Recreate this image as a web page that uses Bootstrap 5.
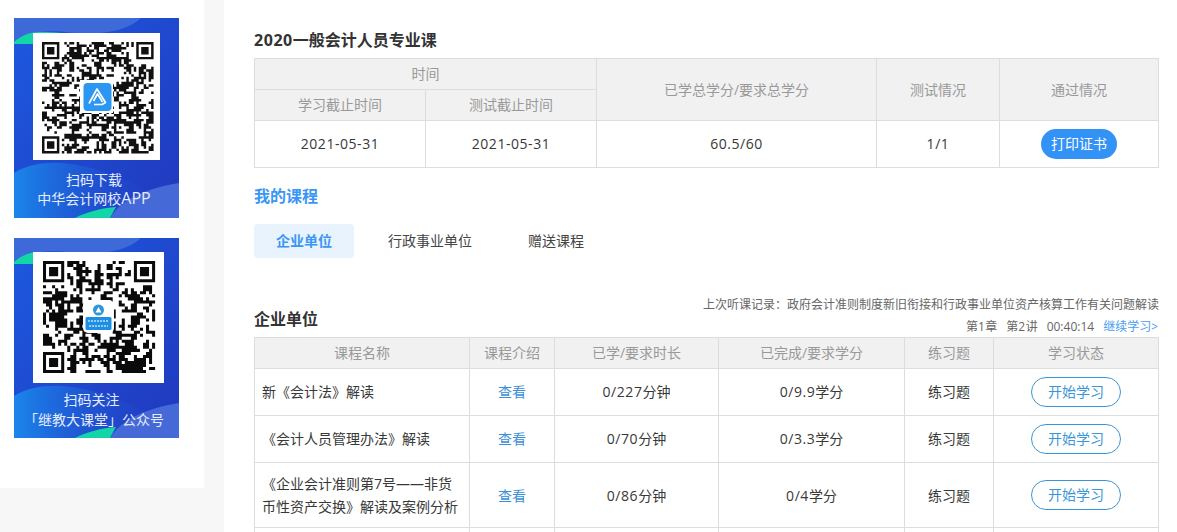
<!DOCTYPE html>
<html lang="zh-CN">
<head>
<meta charset="utf-8">
<title>我的课程</title>
<link href="https://cdn.jsdelivr.net/npm/bootstrap@5.3.0/dist/css/bootstrap.min.css" rel="stylesheet">
<style>
html,body{height:532px;overflow:hidden}
body{background:#f7f7f7;font-family:"Open Sans","Noto Sans CJK SC",sans-serif;font-size:14px;color:#333;line-height:20px}
.shell{height:532px}
.side{width:204px;height:488px;background:#fff;padding:18px 0 0 14px;gap:20px;flex:none}
.main-pane{margin-left:20px;background:#fff;padding:28px 18px 0 30px;flex:1 1 auto;min-width:0}
.promo{position:relative;width:165px;height:200px;overflow:hidden;color:#e6ecff;text-align:center}
.promo-bg{position:absolute;left:0;top:0;width:165px;height:200px}
.promo-body{position:relative}
.qr-box{background:#fff;margin-left:19px;display:block}
.qr-a{width:127px;height:127px;margin-top:15px}
.qr-b{width:131px;height:131px;margin-top:14px}
.qr-box svg{display:block;filter:blur(.3px)}
.promo-txt{line-height:19px;margin-top:10px;width:160px}
.promo-txt-b{line-height:20px;margin-top:7px;width:160px;white-space:nowrap}
.line-shift{padding-right:5px}
.app-word{font-size:16px}
.num{letter-spacing:.55px}
.sec-title{font-size:16px;font-weight:700;line-height:24px;color:#333;margin:0 0 6px}
.sec-blue{color:#3a96f5;margin:16px 0 0}
.tab-row{margin-top:16px;gap:12px}
.tab-item{height:34px;line-height:34px;padding:0 22px;border-radius:4px;color:#444;text-decoration:none}
.tab-on{background:#e8f3fe;color:#3a96f5;font-weight:700}
.sec-head{margin-top:36px}
.last-rec{font-size:12px;color:#666;text-align:right}
.rec-a{line-height:22px;margin-bottom:1px}
.rec-b{line-height:20px;padding-right:1px}
.rec-b a{color:#4a9df0;text-decoration:none;margin-left:9px}
.rec-b span.gap-seg{margin-left:9px}
.rec-lead{letter-spacing:.4px}
.grid-tbl.table{table-layout:fixed;width:904px;margin:0;border-color:#ddd;text-align:center;color:#333}
.grid-tbl.table>*>*>*{padding:0 7px;border-color:#ddd;vertical-align:middle;box-shadow:none;color:#383838;background:#fff;font-weight:400}
.grid-tbl.table>thead>tr>th{background:#f1f1f1;color:#999;height:31px}
.row-cert>td{height:47px}
.row-std>td{height:47px}
.grid-tbl.table>tbody>.row-tall>td{height:65px;line-height:23px}
.grid-tbl.table>tbody>tr>.name-cell{text-align:left}
.grid-tbl .view-link{color:#3a8fd8;text-decoration:none}
.pill-print{width:76px;height:30px;line-height:30px;padding:0;border:0;border-radius:15px;background:#3292f6;color:#fff;font-size:14px}
.pill-start{width:90px;height:30px;line-height:28px;padding:0;border:1px solid #3a96d8;border-radius:15px;background:#fff;color:#3a96d8;font-size:14px}
</style>
</head>
<body>
<div class="shell d-flex">
  <aside class="side d-flex flex-column">
    <div class="promo">
      <svg class="promo-bg" viewBox="0 0 165 200" aria-hidden="true">
        <defs>
          <linearGradient id="bgA" x1="0" y1="0" x2="1" y2="1"><stop offset="0" stop-color="#1c5ae0"/><stop offset="1" stop-color="#2138bd"/></linearGradient>
          <linearGradient id="swA" x1="0" y1="0" x2="1" y2="0"><stop offset="0" stop-color="#1a86ea"/><stop offset=".8" stop-color="#2348cc" stop-opacity=".2"/></linearGradient>
        </defs>
        <rect width="165" height="200" fill="url(#bgA)"/>
        <path d="M0 0H127C112 14 84 18 52 14C32 11 12 16 0 24Z" fill="#3e6ad9"/>
        <path d="M0 24C7 18 15 14 26 14C40 14 55 15 66 18L50 26L0 26Z" fill="#12d5a8"/>
        <path d="M0 155C12 147 30 144 48 145C90 148 130 170 165 190V200H0Z" fill="url(#swA)"/>
        <path d="M96 200C108 180 135 170 165 165V200Z" fill="#4569d6"/>
        <path d="M61 200C72 194 88 190 102 189C100 192 98 196 96 200Z" fill="#12d5a8"/>
      </svg>
      <div class="promo-body">
        <div class="qr-box qr-a"><svg width="127" height="127" viewBox="0 0 127 127" aria-hidden="true"><path class="qr-fill" data-n="45" data-seed="7321" data-x="9" data-y="9" data-s="2.48" fill="#111"/>
          <rect x="47" y="47" width="33" height="33" fill="#fff"/>
          <rect x="50.5" y="50" width="28" height="28" rx="4" fill="#2b97f3"/>
          <path d="M56 70.5L64 56L72.5 69.5L69 71.5L61 71.5M60.5 68L64.5 61L69.5 69" fill="none" stroke="#fff" stroke-width="1.7" stroke-linejoin="round"/>
        </svg></div>
        <div class="promo-txt">扫码下载<br>中华会计网校<span class="app-word">APP</span></div>
      </div>
    </div>
    <div class="promo">
      <svg class="promo-bg" viewBox="0 0 165 200" aria-hidden="true">
        <rect width="165" height="200" fill="url(#bgA)"/>
        <path d="M0 0H127C112 14 84 18 52 14C32 11 12 16 0 24Z" fill="#3e6ad9"/>
        <path d="M0 24C7 18 15 14 26 14C40 14 55 15 66 18L50 26L0 26Z" fill="#12d5a8"/>
        <path d="M0 158C12 150 30 147 48 148C90 151 130 172 165 190V200H0Z" fill="url(#swA)"/>
        <path d="M96 200C108 180 135 170 165 165V200Z" fill="#4569d6"/>
        <path d="M61 200C72 194 88 190 102 189C100 192 98 196 96 200Z" fill="#12d5a8"/>
      </svg>
      <div class="promo-body">
        <div class="qr-box qr-b"><svg width="131" height="131" viewBox="0 0 131 131" aria-hidden="true"><path class="qr-fill" data-n="37" data-seed="1993" data-x="10" data-y="9" data-s="3.03" fill="#0a0a0a"/>
          <rect x="50" y="48" width="31" height="33" rx="5" fill="#fff"/>
          <circle cx="65.5" cy="58" r="5.5" fill="#2b97d8"/>
          <path d="M62.5 60.5L65.5 55L68.5 60.5Z" fill="#fff"/>
          <rect x="52.5" y="65" width="26" height="13" rx="1.5" fill="#1f8fe6"/>
          <path d="M55 69H76M56 74H75" stroke="#bfe2fb" stroke-width="1.6" stroke-dasharray="2 1"/>
        </svg></div>
        <div class="promo-txt-b"><div class="line-shift">扫码关注</div>「继教大课堂」公众号</div>
      </div>
    </div>
  </aside>
  <main class="main-pane">
    <h2 class="sec-title"><span class="num">2020</span>一般会计人员专业课</h2>
    <table class="table table-bordered grid-tbl">
      <colgroup><col style="width:171px"><col style="width:171px"><col style="width:280px"><col style="width:123px"><col style="width:159px"></colgroup>
      <thead>
        <tr><th colspan="2">时间</th><th rowspan="2">已学总学分/要求总学分</th><th rowspan="2">测试情况</th><th rowspan="2">通过情况</th></tr>
        <tr><th>学习截止时间</th><th>测试截止时间</th></tr>
      </thead>
      <tbody>
        <tr class="row-cert"><td class="num">2021-05-31</td><td class="num">2021-05-31</td><td class="num">60.5/60</td><td class="num">1/1</td><td><button type="button" class="btn pill-print">打印证书</button></td></tr>
      </tbody>
    </table>
    <h2 class="sec-title sec-blue">我的课程</h2>
    <div class="d-flex tab-row">
      <a href="#" class="tab-item tab-on">企业单位</a>
      <a href="#" class="tab-item">行政事业单位</a>
      <a href="#" class="tab-item">赠送课程</a>
    </div>
    <div class="sec-head d-flex justify-content-between align-items-end">
      <h2 class="sec-title">企业单位</h2>
      <div class="last-rec">
        <div class="rec-a">上次听课记录：政府会计准则制度新旧衔接和行政事业单位资产核算工作有关问题解读</div>
        <div class="rec-b">第<span class="rec-lead">1</span>章<span class="gap-seg">第<span class="rec-lead">2</span>讲</span><span class="gap-seg">00:40:14</span><a href="#">继续学习&gt;</a></div>
      </div>
    </div>
    <table class="table table-bordered grid-tbl">
      <colgroup><col style="width:215px"><col style="width:85px"><col style="width:164px"><col style="width:186px"><col style="width:89px"><col style="width:165px"></colgroup>
      <thead>
        <tr><th>课程名称</th><th>课程介绍</th><th>已学/要求时长</th><th>已完成/要求学分</th><th>练习题</th><th>学习状态</th></tr>
      </thead>
      <tbody>
        <tr class="row-std"><td class="name-cell">新《会计法》解读</td><td><a href="#" class="view-link">查看</a></td><td><span class="num">0/227</span>分钟</td><td><span class="num">0/9.9</span>学分</td><td>练习题</td><td><button type="button" class="btn pill-start">开始学习</button></td></tr>
        <tr class="row-std"><td class="name-cell">《会计人员管理办法》解读</td><td><a href="#" class="view-link">查看</a></td><td><span class="num">0/70</span>分钟</td><td><span class="num">0/3.3</span>学分</td><td>练习题</td><td><button type="button" class="btn pill-start">开始学习</button></td></tr>
        <tr class="row-tall"><td class="name-cell">《企业会计准则第7号——非货币性资产交换》解读及案例分析</td><td><a href="#" class="view-link">查看</a></td><td><span class="num">0/86</span>分钟</td><td><span class="num">0/4</span>学分</td><td>练习题</td><td><button type="button" class="btn pill-start">开始学习</button></td></tr>
        <tr class="row-std"><td class="name-cell"></td><td></td><td></td><td></td><td></td><td></td></tr>
      </tbody>
    </table>
  </main>
</div>
<script src="https://cdn.jsdelivr.net/npm/bootstrap@5.3.0/dist/js/bootstrap.bundle.min.js"></script>
<script>
document.querySelectorAll('.qr-fill').forEach(function(p){
  var n=+p.dataset.n,s=+p.dataset.s,ox=+p.dataset.x,oy=+p.dataset.y,r=+p.dataset.seed,d='';
  function rnd(){r=(r*1664525+1013904223)%4294967296;return (r>>>8&65535)/65536;}
  function box(x,y,w,h){d+='M'+(ox+x*s).toFixed(2)+' '+(oy+y*s).toFixed(2)+'h'+(w*s).toFixed(2)+'v'+(h*s).toFixed(2)+'h-'+(w*s).toFixed(2)+'z';}
  function finder(x,y){return function(i,j){var a=i-x,b=j-y;if(a<0||b<0||a>6||b>6)return -1;if(a==0||b==0||a==6||b==6)return 1;if(a>=2&&a<=4&&b>=2&&b<=4)return 1;return 0;};}
  var f=[finder(0,0),finder(n-7,0),finder(0,n-7)];
  var up=[];
  for(var j=0;j<n;j++){var row=[];for(var i=0;i<n;i++){
    var v=-1;f.forEach(function(g){var t=g(i,j);if(t>=0)v=t;});
    var near=(i<8&&j<8)||(i>=n-8&&j<8)||(i<8&&j>=n-8);
    if(v<0){var c=(i>0&&row[i-1]?.2:0)+(up[i]?.2:0)+.32;v=near?0:(rnd()<c?1:0);}
    row.push(v);if(v)box(i,j,1,1);
  }up=row;}
  p.setAttribute('d',d);
});
</script>
</body>
</html>
